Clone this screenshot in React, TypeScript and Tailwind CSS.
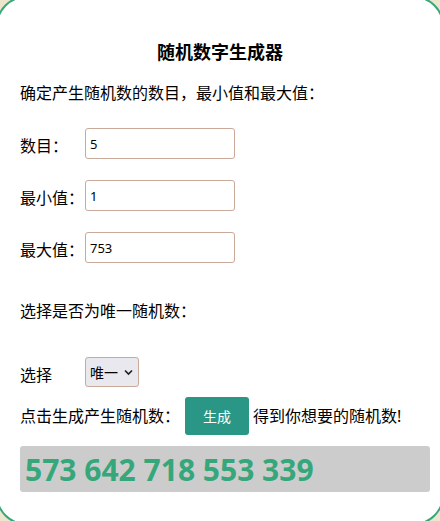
import { useState } from 'react';

const font = { fontFamily: '"Noto Sans", "Noto Sans CJK SC", sans-serif' };

export default function App() {
    const [count, setCount] = useState('5');
    const [min, setMin] = useState('1');
    const [max, setMax] = useState('753');
    const [mode, setMode] = useState('unique');
    const [result, setResult] = useState('573 642 718 553 339');

    // 按数目和范围生成随机数，唯一模式下不重复
    const generate = () => {
        const n = parseInt(count) || 0;
        const lo = parseInt(min) || 0;
        const hi = parseInt(max) || 0;
        const out: number[] = [];
        let guard = 0;
        while (out.length < n && guard < 10000) {
            guard++;
            const v = lo + Math.floor(Math.random() * (hi - lo + 1));
            if (mode === 'unique' && out.includes(v)) continue;
            out.push(v);
        }
        setResult(out.join(' '));
    };

    const rows = [
        { label: '数目：', value: count, set: setCount },
        { label: '最小值：', value: min, set: setMin },
        { label: '最大值：', value: max, set: setMax },
    ];

    return (
        <div className="h-[521px] w-[440px] overflow-hidden bg-[#ede5cc]" style={font}>
            <div className="-mx-[4px] -mt-[4px] h-[529px] rounded-[30px] border-2 border-[#38a67b] bg-white pl-[22px] pr-[12px] pt-[40px] text-[16px] text-black">
                <h1 className="h-[28px] pr-[10px] text-center text-[18px] font-bold leading-[28px]">随机数字生成器</h1>
                <p className="mt-[15px] h-[24px] leading-[24px]">确定产生随机数的数目，最小值和最大值：</p>

                {rows.map((row, idx) => (
                    <div key={idx} className={`flex h-[31px] items-center ${idx === 0 ? 'mt-[23px]' : 'mt-[21px]'}`}>
                        <label className="mt-[4px] w-[65px] leading-[24px]">{row.label}</label>
                        <input
                            value={row.value}
                            onChange={(e) => row.set(e.target.value)}
                            className="h-[31px] w-[150px] rounded-[3px] border border-[#c9aa9a] px-[4px] text-[13px] outline-none"
                        />
                    </div>
                ))}

                <p className="mt-[36px] h-[24px] leading-[24px]">选择是否为唯一随机数：</p>

                <div className="mt-[34px] flex h-[30px] items-center">
                    <label className="mt-[6px] w-[65px] leading-[24px]">选择</label>
                    <div className="relative">
                        <select
                            value={mode}
                            onChange={(e) => setMode(e.target.value)}
                            className="h-[30px] w-[54px] appearance-none rounded-[3px] border border-[#c9aa9a] bg-[#e9e8ee] pl-[4px] text-[14px] outline-none"
                        >
                            <option value="unique">唯一</option>
                            <option value="repeat">可重复</option>
                        </select>
                        <svg
                            className="pointer-events-none absolute right-[6px] top-[12px]"
                            width="9"
                            height="7"
                            viewBox="0 0 9 7"
                            fill="none"
                            stroke="#222"
                            strokeWidth="1.7"
                        >
                            <path d="M1 1.5 L4.5 5 L8 1.5" />
                        </svg>
                    </div>
                </div>

                <div className="mt-[10px] flex h-[38px] items-center">
                    <span className="leading-[24px]">点击生成产生随机数：</span>
                    <button
                        type="button"
                        onClick={generate}
                        className="ml-[5px] h-[38px] w-[64px] rounded-[3px] bg-[#2a9686] text-[14px] text-white"
                    >
                        生成
                    </button>
                    <span className="ml-[4px] leading-[24px]">得到你想要的随机数!</span>
                </div>

                <div className="mt-[11px] flex h-[46px] items-center rounded-[3px] bg-[#cccccc] pl-[5px] text-[30px] font-bold text-[#35a77a]">
                    {result}
                </div>
            </div>
        </div>
    );
}
